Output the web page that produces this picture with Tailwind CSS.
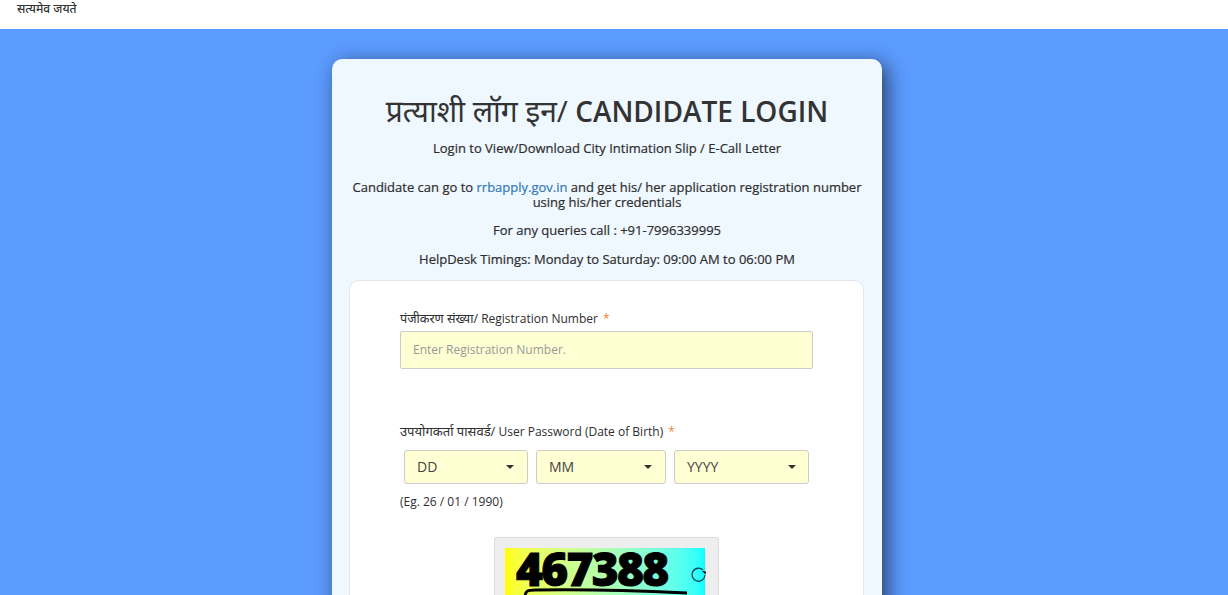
<!DOCTYPE html>
<html lang="en">
<head>
  <meta charset="UTF-8" />
  <meta name="viewport" content="width=device-width, initial-scale=1.0" />
  <title>Candidate Login</title>
  <script src="https://cdn.jsdelivr.net/npm/@tailwindcss/browser@4"></script>
</head>
<body class="h-screen overflow-hidden bg-[#5c9bff] font-['Open_Sans','Noto_Sans',sans-serif] text-[#2e2e2e]">
  <header class="h-[29px] bg-white pl-[17px]">
    <p class="font-['Noto_Sans',serif] text-[12px] leading-[17px] font-medium text-[#333]">सत्यमेव जयते</p>
  </header>

  <div class="pr-[14px]">
    <main class="mx-auto mt-[30px] w-[550px] rounded-[10px] bg-[#eff7ff] px-[17px] pt-[32px] shadow-[5px_5px_20px_rgba(0,0,0,0.6)]">
      <h1 class="text-center text-[28px] leading-[40px] font-semibold text-[#333]"><span class="text-[30px] font-normal">प्रत्याशी लॉग इन/</span> CANDIDATE LOGIN</h1>
      <p class="mt-[8px] text-center text-[13px] leading-[18px] font-medium [-webkit-text-stroke:0.2px_#2e2e2e]">Login to View/Download City Intimation Slip / E-Call Letter</p>
      <p class="mt-[23px] text-center text-[13px] leading-[15px] font-medium [-webkit-text-stroke:0.2px_#2e2e2e]">Candidate can go to <a href="#" class="text-[#337ab7] [-webkit-text-stroke:0.2px_#337ab7]">rrbapply.gov.in</a> and get his/ her application registration number using his/her credentials</p>
      <p class="mt-[11px] text-center text-[13px] leading-[18px] font-medium [-webkit-text-stroke:0.2px_#2e2e2e]">For any queries call : +91-7996339995</p>
      <p class="mt-[11px] text-center text-[13px] leading-[18px] font-medium [-webkit-text-stroke:0.2px_#2e2e2e]">HelpDesk Timings: Monday to Saturday: 09:00 AM to 06:00 PM</p>

      <form class="mt-[12px] h-[400px] w-[515px] rounded-[10px] border border-[#e3e6ea] bg-white pt-[29px] pl-[50px]">
        <label class="block text-[12px] leading-[18px]"><span class="text-[12.6px]">पंजीकरण संख्या/</span> Registration Number <span class="ml-[2px] text-[#f58233]">*</span></label>
        <input type="text" placeholder="Enter Registration Number." class="mt-[3px] block h-[38px] w-[413px] rounded-[2px] border border-[#ccc] bg-[#ffffd3] px-[12px] pb-[2px] text-[12px] placeholder:text-[#999]" />

        <label class="mt-[53px] block text-[12px] leading-[18px]"><span class="text-[13px]">उपयोगकर्ता पासवर्ड/</span> User Password (Date of Birth) <span class="ml-[2px] text-[#f58233]">*</span></label>
        <div class="mt-[9px] flex gap-[8px] pl-[4px]">
          <div class="flex h-[34px] w-[124px] items-center justify-between rounded-[3px] border border-[#ccc] bg-[#ffffd3] pr-[13px] pl-[12px] text-[14px] text-[#444]">
            <span class="pb-[2px]">DD</span><span class="border-x-[4px] border-t-[4px] border-x-transparent border-t-[#333]"></span>
          </div>
          <div class="flex h-[34px] w-[130px] items-center justify-between rounded-[3px] border border-[#ccc] bg-[#ffffd3] pr-[13px] pl-[12px] text-[14px] text-[#444]">
            <span class="pb-[2px]">MM</span><span class="border-x-[4px] border-t-[4px] border-x-transparent border-t-[#333]"></span>
          </div>
          <div class="flex h-[34px] w-[135px] items-center justify-between rounded-[3px] border border-[#ccc] bg-[#ffffd3] pr-[12px] pl-[12px] text-[14px] text-[#444]">
            <span class="pb-[2px]">YYYY</span><span class="border-x-[4px] border-t-[4px] border-x-transparent border-t-[#333]"></span>
          </div>
        </div>
        <p class="mt-[9px] text-[12px] leading-[18px]">(Eg. 26 / 01 / 1990)</p>

        <div class="mt-[26px] ml-[94px] h-[100px] w-[225px] rounded-[2px] border border-[#ddd] bg-[#eee] pt-[10px] pl-[10px]">
          <div class="relative h-[80px] w-[200px] bg-gradient-to-r from-[#ffff00] to-[#00ffff]">
            <span class="absolute top-[-10px] left-[11px] text-[46px] leading-[60px] font-extrabold tracking-[-1.7px] text-black [-webkit-text-stroke:1px_black]">467388</span>
            <svg class="absolute top-0 left-0 overflow-visible" width="200" height="80" viewBox="0 0 200 80" fill="none">
              <path d="M20 50 C20 43 22 42 30 42 C80 41 140 43 182 45" stroke="#000" stroke-width="3" />
              <path d="M198 22 A6.5 6.5 0 1 0 200 27" stroke="#0a4a5c" stroke-width="1.3" />
              <path d="M197 23 l4 0.5 l-0.5 3 z" fill="#000" />
            </svg>
          </div>
        </div>
      </form>
    </main>
  </div>
</body>
</html>
